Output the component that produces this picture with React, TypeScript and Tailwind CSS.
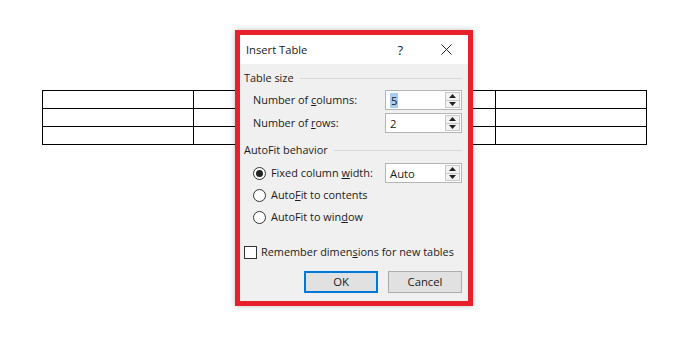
import React from "react";

const font = { fontFamily: '"Open Sans", "Noto Sans", sans-serif' };

function Spin({ value, selected }: { value: string; selected?: boolean }) {
  return (
    <div className="flex h-[20px] w-[77px] shrink-0 items-stretch border border-[#b4b4b4] bg-white py-[1px] pl-[4px] pr-[1px]">
      <div className="flex flex-1 items-center text-[11.3px]">
        <span className={selected ? "bg-[#a8cdf0] px-[1px] leading-[15px]" : "leading-[15px]"}>{value}</span>
      </div>
      <div className="flex w-[15px] flex-col border border-[#c8c8c8] bg-[#f3f3f3]">
        <div className="flex flex-1 items-center justify-center border-b border-[#c8c8c8]">
          <svg width="7" height="4" viewBox="0 0 7 4"><path d="M0 4 L3.5 0 L7 4 Z" fill="#222" /></svg>
        </div>
        <div className="flex flex-1 items-center justify-center">
          <svg width="7" height="4" viewBox="0 0 7 4"><path d="M0 0 L3.5 4 L7 0 Z" fill="#222" /></svg>
        </div>
      </div>
    </div>
  );
}

function Radio({ checked, children }: { checked?: boolean; children: React.ReactNode }) {
  return (
    <div className="flex h-[22px] items-center gap-[5px]">
      <div className="flex h-[13px] w-[13px] items-center justify-center rounded-full border border-[#333] bg-white">
        {checked && <div className="h-[7px] w-[7px] rounded-full bg-[#222]" />}
      </div>
      <span className="whitespace-nowrap">{children}</span>
    </div>
  );
}

function Group({ title }: { title: string }) {
  return (
    <div className="flex h-[16px] items-center gap-[6px]">
      <span className="whitespace-nowrap">{title}</span>
      <div className="h-px flex-1 bg-[#d8d8d8]" />
    </div>
  );
}

export default function App() {
  const rows = [0, 1, 2];
  const cols = [0, 1, 2, 3];
  return (
    <div className="relative h-[351px] w-[695px] overflow-hidden bg-white" style={font}>
      <div className="pl-[42px] pt-[90px]">
        <table className="border-collapse">
          <tbody>
            {rows.map(r => (
              <tr key={r}>
                {cols.map(c => (
                  <td key={c} className="h-[18px] w-[151px] border-[1.5px] border-black p-0" />
                ))}
              </tr>
            ))}
          </tbody>
        </table>
      </div>

      <div className="absolute left-[235px] top-[30px] h-[276px] w-[238px] border-[5px] border-[#e8202a] shadow-[0_0_6px_rgba(0,0,0,0.25)]">
        <div className="flex h-full flex-col bg-[#f0f0f0] text-[10.9px] leading-[16px] text-[#1a1a1a]">
          <div className="flex h-[29px] shrink-0 items-center bg-white pl-[6px]">
            <span className="flex-1 text-[11.2px]">Insert Table</span>
            <span className="mr-[38px] text-[13px]">?</span>
            <svg width="11" height="11" viewBox="0 0 11 11" className="mr-[16px]">
              <path d="M0.5 0.5 L10.5 10.5 M10.5 0.5 L0.5 10.5" stroke="#222" strokeWidth="1" />
            </svg>
          </div>

          <div className="flex flex-col pl-[4px] pr-[6px] pt-[6px]">
            <Group title="Table size" />
            <div className="flex flex-col gap-[3px] pl-[9px] pt-[4px]">
              <div className="flex items-center justify-between">
                <span className="whitespace-nowrap">Number of <u>c</u>olumns:</span>
                <Spin value="5" selected />
              </div>
              <div className="flex items-center justify-between">
                <span className="whitespace-nowrap">Number of <u>r</u>ows:</span>
                <Spin value="2" />
              </div>
            </div>

            <div className="pt-[9px]">
              <Group title="AutoFit behavior" />
            </div>
            <div className="flex flex-col pl-[9px] pt-[4px]">
              <div className="flex items-center justify-between">
                <Radio checked>Fixed column <u>w</u>idth:</Radio>
                <Spin value="Auto" />
              </div>
              <Radio>Auto<u>F</u>it to contents</Radio>
              <Radio>AutoFit to win<u>d</u>ow</Radio>
            </div>

            <div className="mt-[16px] flex h-[16px] items-center gap-[4px]">
              <div className="h-[13px] w-[13px] shrink-0 border border-[#333] bg-white" />
              <span className="whitespace-nowrap">Remember dimen<u>s</u>ions for new tables</span>
            </div>

            <div className="flex justify-end gap-[10px] pt-[11px]">
              <button className="h-[22px] w-[74px] border-2 border-[#0078d7] bg-[#e1e1e1] text-[11.3px]">OK</button>
              <button className="h-[22px] w-[74px] border border-[#adadad] bg-[#e1e1e1] text-[11.3px]">Cancel</button>
            </div>
          </div>
        </div>
      </div>
    </div>
  );
}
